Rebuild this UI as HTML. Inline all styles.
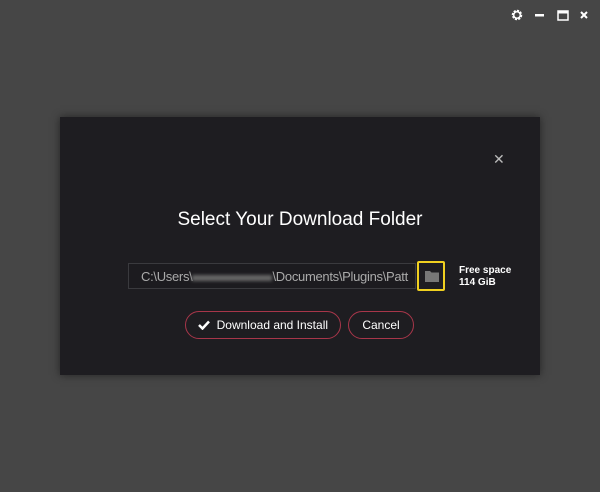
<!DOCTYPE html>
<html><head><style>
body{margin:0;width:600px;height:492px;background:#464646;font-family:"Liberation Sans",sans-serif;position:relative;overflow:hidden}
.dlg{position:absolute;left:60px;top:117px;width:480px;height:258px;background:#1e1d21;box-shadow:0 0 8px rgba(0,0,0,.5)}
.title{position:absolute;left:0;width:480px;top:92px;text-align:center;color:#fff;font-size:19px}
.close{position:absolute;left:433px;top:34px;color:#bbb;font-size:14px}
.inp{position:absolute;left:68px;top:146px;height:26px;border:1px solid #3a3a3e;background:#1c1b1f;color:#aaa;font-size:13px;line-height:26px;padding-left:12px;white-space:nowrap;overflow:hidden;box-sizing:border-box;width:288px;letter-spacing:-0.3px}
.blur{display:inline-block;width:80px;height:6px;background:#666;vertical-align:middle;filter:blur(1.5px)}
.fold{position:absolute;left:357px;top:144px;width:28px;height:30px;border:2px solid #f0d020;border-radius:2px;box-sizing:border-box;background:#1e1d21}
.free{position:absolute;left:399px;top:148px;color:#fff;font-size:10px;font-weight:bold;line-height:12px}
.btn{position:absolute;top:194px;height:28px;border:1.5px solid #a8364a;border-radius:15px;color:#fff;font-size:12px;line-height:26px;text-align:center;box-sizing:border-box}
</style></head><body>
<svg style="position:absolute;left:511px;top:9px" width="80" height="14">
<circle cx="6" cy="6" r="4" fill="none" stroke="#fff" stroke-width="2.5" stroke-dasharray="2 1.1"/><circle cx="6" cy="6" r="3.3" fill="none" stroke="#fff" stroke-width="1.5"/>
<rect x="24" y="5" width="9" height="2.5" fill="#fff"/>
<rect x="47" y="2" width="10" height="9" fill="none" stroke="#fff" stroke-width="1.5"/><rect x="47" y="2" width="10" height="2.5" fill="#fff"/>
<path d="M70 3L76 9M76 3L70 9" stroke="#fff" stroke-width="2"/>
</svg>
<div class="dlg">
<div class="close">✕</div>
<div class="title">Select Your Download Folder</div>
<div class="inp">C:\Users\<span class="blur"></span>\Documents\Plugins\Patt</div>
<div class="fold"><svg style="position:absolute;left:6px;top:7px" width="14" height="12"><path d="M0 1h5l1.5 1.5H14V12H0z" fill="#777"/></svg></div>
<div class="free">Free space<br>114 GiB</div>
<div class="btn" style="left:125px;width:156px"><svg width="12" height="10" style="vertical-align:-1px"><path d="M1 5l3.5 3.5L11 1.5" stroke="#fff" stroke-width="2.5" fill="none"/></svg>&nbsp; Download and Install</div>
<div class="btn" style="left:288px;width:66px">Cancel</div>
</div>
</body></html>
